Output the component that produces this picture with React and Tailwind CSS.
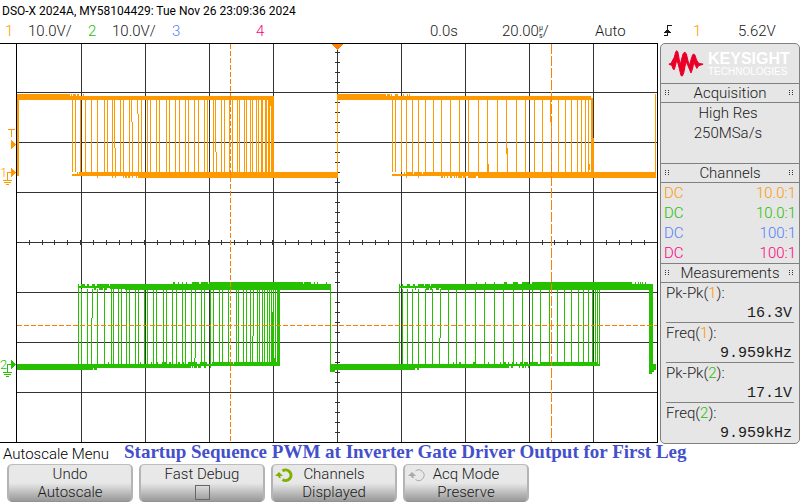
import React from "react";

const ORANGE = "#ff9900";
const GREEN = "#26c000";
const CURSOR = "#ff8000";

/* [x, y, width, height] boxes of the channel 1 trace */
const ch1Boxes = [
  [17, 94, 2, 82], [17, 94, 53, 6], [70, 96, 204, 4], [71, 94, 1, 2], [73, 94, 3, 2], [77, 94, 2, 2], [83, 94, 1, 2],
  [72, 174, 8, 2], [77, 172, 1, 2], [79, 172, 59, 4], [138, 172, 200, 6], [97, 176, 1, 2], [112, 176, 1, 2], [115, 176, 1, 2],
  [123, 176, 1, 2], [125, 176, 2, 2], [128, 176, 2, 2], [132, 176, 1, 2], [136, 176, 1, 2],
  [261, 100, 2, 72], [265, 100, 2, 72], [268, 100, 2, 72], [270, 100, 1, 6], [271, 100, 3, 72],
  [337, 94, 49, 6], [337, 94, 1, 84], [386, 96, 205, 4], [387, 94, 3, 2], [391, 94, 1, 2], [395, 94, 3, 2], [403, 94, 1, 2], [407, 94, 1, 2], [409, 94, 1, 2],
  [591, 98, 2, 74], [593, 138, 1, 34],
  [392, 174, 14, 2], [404, 172, 1, 2], [406, 172, 7, 4], [413, 174, 10, 2], [414, 172, 8, 2], [423, 172, 55, 4], [478, 172, 178, 6], [406, 176, 1, 2], [418, 176, 1, 2],
  [441, 176, 2, 2], [444, 176, 1, 2], [447, 176, 1, 2], [450, 176, 2, 2], [454, 176, 1, 2], [456, 176, 1, 2], [458, 176, 4, 2], [463, 176, 3, 2], [468, 176, 8, 2],
  [655, 94, 1, 84], [488, 164, 1, 8], [507, 148, 1, 24], [589, 164, 1, 6],
];
const ch1Edges = [
  72, 75, 80, 85, 91, 97, 104, 107, 112, 120, 123, 129, 141, 147, 150, 156, 159, 166, 169, 175, 179, 185, 188, 194, 198,
  204, 207, 213, 221, 224, 229, 232, 237, 239, 244, 246, 250, 252, 256, 258,
  392, 395, 401, 406, 412, 418, 425, 433, 441, 450, 459, 468, 478, 487, 497, 516, 525, 534, 542, 558, 565, 571, 577, 581, 585, 588,
];
/* edges that jump one column: [x above, x below, y of the jump] */
const ch1Jumps = [[114, 115, 148], [131, 132, 122], [137, 138, 114], [215, 216, 152], [506, 507, 154], [550, 551, 122]];

const ch2Boxes = [
  [17, 364, 76, 6], [93, 364, 97, 4], [94, 368, 3, 2], [190, 364, 90, 2], [190, 366, 1, 2], [192, 366, 1, 2], [194, 366, 3, 2], [198, 366, 3, 2], [204, 366, 2, 2], [210, 366, 1, 2],
  [108, 362, 1, 2], [140, 362, 1, 2], [151, 362, 1, 2], [157, 362, 1, 2], [162, 362, 4, 2], [169, 362, 2, 2], [178, 362, 2, 2], [183, 362, 1, 2], [188, 362, 9, 2],
  [200, 362, 7, 2], [212, 362, 21, 2], [234, 362, 46, 2], [273, 358, 3, 4],
  [78, 284, 1, 80], [78, 286, 32, 2], [81, 284, 4, 2], [87, 284, 2, 2], [92, 284, 3, 2], [97, 284, 12, 2], [94, 288, 2, 2], [99, 288, 4, 2], [104, 288, 3, 2],
  [110, 284, 221, 5], [125, 289, 206, 1], [173, 282, 2, 2], [178, 282, 1, 2], [182, 282, 1, 2], [186, 282, 1, 2], [192, 282, 7, 2],
  [201, 282, 7, 2], [209, 282, 94, 2], [304, 282, 7, 2], [314, 282, 1, 2], [317, 282, 1, 2], [326, 282, 1, 2],
  [271, 312, 2, 50], [277, 290, 3, 76], [330, 284, 1, 88], [330, 364, 83, 6], [330, 370, 5, 2],
  [399, 284, 1, 80], [399, 286, 32, 2], [402, 284, 1, 2], [407, 284, 3, 2], [413, 284, 2, 2], [418, 284, 6, 2], [425, 284, 5, 2],
  [415, 288, 1, 2], [426, 288, 3, 2], [430, 288, 2, 2], [436, 288, 3, 2], [441, 288, 4, 2],
  [431, 284, 14, 4], [445, 284, 208, 6], [476, 282, 1, 2], [485, 282, 1, 2], [494, 282, 1, 2], [504, 282, 3, 2], [513, 282, 5, 2], [522, 282, 7, 2],
  [532, 282, 100, 2], [635, 282, 1, 2], [638, 282, 1, 2], [640, 282, 1, 2], [642, 282, 1, 2], [645, 282, 1, 2],
  [649, 284, 4, 86], [649, 370, 3, 4], [652, 368, 2, 4], [653, 364, 3, 6],
  [413, 364, 96, 4], [413, 368, 2, 2], [417, 368, 2, 2], [509, 364, 91, 2], [511, 366, 2, 2], [519, 366, 1, 2], [522, 366, 2, 2], [525, 366, 1, 2], [528, 366, 1, 2],
  [453, 362, 1, 2], [459, 362, 2, 2], [473, 362, 2, 2], [488, 362, 1, 2], [500, 362, 1, 2], [503, 362, 3, 2], [508, 362, 1, 2], [512, 362, 2, 2], [516, 362, 1, 2], [520, 362, 2, 2],
  [524, 362, 4, 2], [530, 362, 8, 2], [540, 362, 58, 2],
];
const ch2Edges = [
  81, 87, 97, 104, 111, 113, 118, 121, 126, 129, 135, 138, 144, 147, 153, 156, 163, 166, 172, 176, 182, 185, 191,
  201, 204, 210, 213, 219, 222, 228, 236, 238, 243, 246, 250, 257, 259, 262, 264, 267, 269, 271, 273, 275,
  402, 407, 412, 418, 425, 432, 448, 456, 465, 475, 484, 494, 503, 513, 522, 532, 540, 549, 557, 564, 571, 578, 583, 588, 592, 595, 597, 599,
];
const ch2Jumps = [[92, 91, 318], [195, 194, 358], [253, 252, 336], [440, 439, 338]];

const gridX = [81, 145, 209, 273, 337, 401, 465, 529, 593];
const gridY = [92, 142, 192, 242, 292, 342, 392];

function Trace({ color, boxes, edges, jumps, top, bottom }) {
  return (
    <g fill={color}>
      {edges.map((x) => (
        <rect key={x} x={x} y={top} width="1" height={bottom - top} />
      ))}
      {jumps.map(([a, b, y]) => (
        <React.Fragment key={a}>
          <rect x={a} y={top} width="1" height={y - top} />
          <rect x={b} y={y} width="1" height={bottom - y} />
        </React.Fragment>
      ))}
      {boxes.map(([x, y, w, h], i) => (
        <rect key={i} x={x} y={y} width={w} height={h} />
      ))}
    </g>
  );
}

function GroundMarker({ y, color, label }) {
  return (
    <g fill={color}>
      <text x="0" y={y + 5} fontSize="13" fontFamily="Roboto, sans-serif">{label}</text>
      <polygon points={`11,${y - 4} 16,${y + 0.5} 11,${y + 5}`} />
      <rect x="7" y={y} width="5" height="1" />
      <rect x="7" y={y} width="1" height="8" />
      <rect x="3" y={y + 8} width="9" height="1" />
      <rect x="4" y={y + 10} width="7" height="1" />
      <rect x="6" y={y + 12} width="3" height="1" />
    </g>
  );
}

function Plot() {
  return (
    <svg viewBox="0 43 660 400" className="block h-auto w-full" shapeRendering="crispEdges" role="img" aria-label="Waveforms">
      <g fill="#333333">
        {gridX.map((x) => <rect key={x} x={x} y="43" width="1" height="400" />)}
        {gridY.map((y) => <rect key={y} x="16" y={y} width="641" height="1" />)}
        {Array.from({ length: 39 }, (_, i) => (
          <rect key={i} x="335" y={52 + i * 10} width="5" height="1" />
        ))}
        {Array.from({ length: 49 }, (_, i) => (
          <rect key={i} x={Math.round(16 + (i + 1) * 12.82)} y="240" width="1" height="5" />
        ))}
      </g>
      <g fill="#000000">
        <rect x="0" y="43" width="658" height="1" />
        <rect x="0" y="442" width="658" height="1" />
        <rect x="16" y="43" width="1" height="400" />
        <rect x="657" y="43" width="1" height="400" />
      </g>
      <Trace color={ORANGE} boxes={ch1Boxes} edges={ch1Edges} jumps={ch1Jumps} top={100} bottom={172} />
      <Trace color={GREEN} boxes={ch2Boxes} edges={ch2Edges} jumps={ch2Jumps} top={289} bottom={364} />
      <g stroke={CURSOR} strokeWidth="1" fill="none">
        <path d="M230.5 44V442" strokeDasharray="5 2" />
        <path d="M551.5 44V442" strokeDasharray="10 2" />
        <path d="M17 325.5H657" strokeDasharray="5 2" />
      </g>
      <polygon points="332,44 343,44 337.5,50" fill={CURSOR} />
      <g fill={ORANGE}>
        <rect x="8" y="129" width="7" height="1" />
        <rect x="11" y="129" width="1" height="8" />
        <polygon points="11,140 16,144.5 11,149" />
      </g>
      <GroundMarker y={172} color={ORANGE} label="1" />
      <GroundMarker y={364} color={GREEN} label="2" />
    </svg>
  );
}

function Grip() {
  return (
    <svg viewBox="0 0 6 6" className="h-[6px] w-[6px]" shapeRendering="crispEdges" fill="#333">
      {[0, 2, 4].map((y) => (
        <React.Fragment key={y}>
          <rect x="0" y={y} width="1" height="1" />
          <rect x="3" y={y} width="1" height="1" />
        </React.Fragment>
      ))}
    </svg>
  );
}

function SectionTitle({ children }) {
  return (
    <h2 className="flex h-5 items-center justify-between border-y border-[#808080] px-1 text-[15px] leading-[18px]">
      <Grip />
      {children}
      <Grip />
    </h2>
  );
}

function Measurement({ name, source, sourceClass, value, last }) {
  return (
    <div className={`mx-[5px] h-10 ${last ? "" : "border-b border-[#808080]"}`}>
      <dt className="h-5 text-[15px] leading-5">
        {name}(<span className={sourceClass}>{source}</span>):
      </dt>
      <dd className="h-5 pr-[2px] text-right font-['Liberation_Mono',monospace] text-[15px] leading-[22px]">{value}</dd>
    </div>
  );
}

const channels = [
  ["10.0:1", "text-[#ff9900]"],
  ["10.0:1", "text-[#26c000]"],
  ["100:1", "text-[#5080ff]"],
  ["100:1", "text-[#ff0080]"],
];

function Sidebar() {
  return (
    <aside className="w-[140px] shrink-0 rounded-[5px] border border-[#808080] bg-[#e6e6e6] text-[#1a1a1a]">
      <div className="flex h-[39px] items-center gap-1 pl-[7px]">
        <svg viewBox="0 0 108 82" className="h-[27px] w-9" fill="#e90029" stroke="#e90029" strokeWidth="3" strokeLinejoin="round">
          <path d="M2 43 L9 40 L14 30 L18 23 L23 5 Q26 0 29 5 L33 26 L36 46 L40 30 L45 12 L50 6 L55 12 L60 32 L64 48 L69 30 L74 15 L77 12 L81 15 L86 30 L92 40 L106 43 L98 46 L92 48 L87 56 L83 48 L78 38 L73 60 L69 70 L65 60 L60 48 L55 36 L51 50 L47 70 L43 79 L39 78 L34 58 L30 42 L26 30 L22 48 L18 60 L15 58 L11 47 Z" />
        </svg>
        <div className="whitespace-nowrap font-['Liberation_Sans',sans-serif] text-white">
          <div className="text-[16px] font-semibold leading-[15px]">KEYSIGHT</div>
          <div className="text-[10px] font-normal leading-[11px]">TECHNOLOGIES</div>
        </div>
      </div>
      <SectionTitle>Acquisition</SectionTitle>
      <div className="h-[60px] pr-1 text-center text-[15px] leading-5">
        <p>High Res</p>
        <p>250MSa/s</p>
      </div>
      <SectionTitle>Channels</SectionTitle>
      <ul className="h-20 px-[3px]">
        {channels.map(([ratio, color], i) => (
          <li key={i} className={`flex h-5 justify-between text-[15px] leading-5 ${color}`}>
            <span>DC</span>
            <span>{ratio}</span>
          </li>
        ))}
      </ul>
      <SectionTitle>Measurements</SectionTitle>
      <dl>
        <Measurement name="Pk-Pk" source="1" sourceClass="text-[#ff9900]" value="16.3V" />
        <Measurement name="Freq" source="1" sourceClass="text-[#ff9900]" value="9.959kHz" />
        <Measurement name="Pk-Pk" source="2" sourceClass="text-[#26c000]" value="17.1V" />
        <Measurement name="Freq" source="2" sourceClass="text-[#26c000]" value="9.959kHz" last />
      </dl>
    </aside>
  );
}

function KnobArrow({ active }) {
  return (
    <svg viewBox="0 0 18 15" className="h-[15px] w-[18px]" fill="none" stroke={active ? "#80b000" : "#a8a8a8"} strokeWidth={active ? 3 : 1}>
      <path d="M7.5 3 A5.3 5.3 0 1 1 7.5 11.5" />
      <path d="M0 8 L4 4 L8 8 L5 8 L6 10 L4 10 L3 8 Z" fill={active ? "#80b000" : "#a8a8a8"} stroke="none" />
    </svg>
  );
}

function SoftKey({ children }) {
  return (
    <div className="relative h-[38px] w-[126px] rounded-[5px] border-x-2 border-t border-b border-x-[#b4b4b4] border-t-[#bdbdbd] border-b-[#929292] bg-linear-to-b from-[#e8e8e8] from-50% to-[#999999] text-center text-[15px] leading-[18px] text-[#1a1a1a]">
      {children}
    </div>
  );
}

export default function App() {
  return (
    <main className="w-full bg-white font-[Roboto,sans-serif] font-light text-black">
      <header className="h-[43px] whitespace-nowrap">
        <h1 className="h-[21px] pl-[2px] text-[12px] font-normal leading-[23px]">DSO-X 2024A, MY58104429: Tue Nov 26 23:09:36 2024</h1>
        <div className="grid h-[22px] grid-cols-[23fr_60fr_24fr_60fr_84fr_174fr_72fr_93fr_69fr_29fr_45fr_62fr] pl-[5px] text-[15px] leading-[21px] text-[#1a1a1a]">
          <span className="text-[#ff9900]">1</span>
          <span>10.0V/</span>
          <span className="text-[#26c000]">2</span>
          <span>10.0V/</span>
          <span className="text-[#5080ff]">3</span>
          <span className="text-[#ff0080]">4</span>
          <span>0.0s</span>
          <span className="flex">
            20.00
            <span className="flex flex-col items-center justify-center text-[7px] font-normal leading-[8px]">
              <span>µ</span>
              <span>s</span>
            </span>
            /
          </span>
          <span>Auto</span>
          <svg viewBox="0 0 8 12" className="mt-1 h-3 w-2" shapeRendering="crispEdges" fill="#1a1a1a">
            <path d="M3 0H8V1H4V11H0V10H3Z" />
            <path d="M3 4H4L7 8H0Z" />
          </svg>
          <span className="text-[#ff9900]">1</span>
          <span>5.62V</span>
        </div>
      </header>
      <div className="flex items-start">
        <div className="min-w-0 flex-1">
          <Plot />
        </div>
        <Sidebar />
      </div>
      <footer>
        <div className="flex h-5 items-start whitespace-nowrap">
          <h2 className="w-[124px] pl-[3px] text-[15px] leading-5">Autoscale Menu</h2>
          <p className="font-['Liberation_Serif',serif] text-[19px] font-bold leading-4 text-[#444fcc]">
            Startup Sequence PWM at Inverter Gate Driver Output for First Leg
          </p>
        </div>
        <div className="flex gap-[6px] pl-[7px]">
          <SoftKey>
            <button className="block h-full w-full">
              Undo
              <br />
              Autoscale
            </button>
          </SoftKey>
          <SoftKey>
            <label className="flex h-full flex-col items-center">
              Fast Debug
              <input type="checkbox" className="mt-[2px] h-[15px] w-[15px] appearance-none border border-[#666]" />
            </label>
          </SoftKey>
          <SoftKey>
            <button className="block h-full w-full">
              <span className="absolute left-[2px] top-[3px]"><KnobArrow active /></span>
              Channels
              <br />
              Displayed
            </button>
          </SoftKey>
          <SoftKey>
            <button className="block h-full w-full">
              <span className="absolute left-[3px] top-[3px]"><KnobArrow /></span>
              Acq Mode
              <br />
              Preserve
            </button>
          </SoftKey>
        </div>
      </footer>
    </main>
  );
}
